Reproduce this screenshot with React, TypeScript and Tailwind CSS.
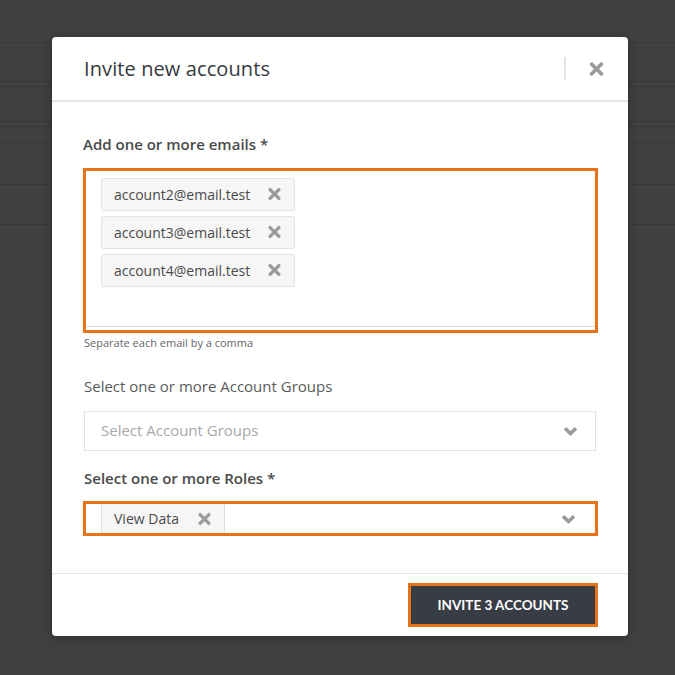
import React from 'react';
import { FaTimes } from 'react-icons/fa';

const emails = ['account2@email.test', 'account3@email.test', 'account4@email.test'];

const Chevron: React.FC = () => (
  <svg width="15" height="10" viewBox="0 0 15 10" className="shrink-0">
    <path d="M2 2.2 L7.5 7.5 L13 2.2" fill="none" stroke="#9a9a9a" strokeWidth="3.6" strokeLinejoin="miter" />
  </svg>
);

const Chip: React.FC<{ label: string }> = ({ label }) => (
  <div className="flex h-[33px] w-[194px] shrink-0 items-center justify-between rounded-[2px] border border-[#e4e4e4] bg-[#f6f6f6] pl-[12px] pr-[12px]">
    <span className="text-[14px] text-[#4a4a4a]">{label}</span>
    <FaTimes className="h-[18px] w-[15px] text-[#9a9a9a]" />
  </div>
);

const App: React.FC = () => {
  return (
    <div className="relative h-[675px] w-[675px] overflow-hidden bg-[#404040] font-['Open_Sans',sans-serif]">
      {/* page behind the overlay */}
      <div className="flex flex-col">
        <div className="h-[43px] border-b border-[#383838]" />
        <div className="h-[39px] border-b border-[#383838]" />
        <div className="h-[5px] border-b border-[#383838]" />
        <div className="h-[35px] border-b border-[#383838]" />
        <div className="h-[5px] border-b border-[#383838]" />
        <div className="h-[16px] border-b border-[#383838]" />
        <div className="h-[42px] border-b border-[#383838]" />
        <div className="h-[40px] border-b border-[#383838]" />
      </div>

      {/* modal */}
      <div className="absolute left-[52px] top-[37px] flex h-[599px] w-[576px] flex-col rounded-[4px] bg-white shadow-[0_2px_10px_rgba(0,0,0,0.3)]">
        <div className="flex h-[65px] shrink-0 items-center border-b-2 border-[#e6e6e6] pl-[32px] pr-[23px]">
          <h2 className="flex-1 text-[20px] tracking-[0.1px] text-[#353a40]">Invite new accounts</h2>
          <div className="mr-[22px] h-[23px] w-[2px] bg-[#e2e2e2]" />
          <FaTimes className="h-[20px] w-[17px] text-[#9a9a9a]" />
        </div>

        <div className="flex flex-1 flex-col px-[31px] pt-[31px]">
          <label className="text-[15px] font-semibold text-[#4a4a4a]">Add one or more emails *</label>
          <div className="mt-[12px] h-[165px] w-[515px] shrink-0 border-[3px] border-[#e5731b]">
            <div className="flex h-[156px] flex-col gap-[5px] border-b border-[#dcdcdc] pl-[15px] pt-[7px]">
              {emails.map((e) => (
                <Chip key={e} label={e} />
              ))}
            </div>
          </div>
          <p className="mt-[2px] pl-[1px] text-[11px] text-[#666]">Separate each email by a comma</p>

          <label className="mt-[24px] pl-[1px] text-[15px] text-[#5a5a5a]">Select one or more Account Groups</label>
          <div className="ml-[1px] mt-[13px] flex h-[40px] w-[512px] shrink-0 items-center justify-between border border-[#e2e2e2] pl-[16px] pr-[17px]">
            <span className="text-[15px] text-[#a8a8a8]">Select Account Groups</span>
            <Chevron />
          </div>

          <label className="mt-[16px] pl-[1px] text-[15px] font-semibold text-[#4a4a4a]">Select one or more Roles *</label>
          <div className="mt-[12px] flex h-[35px] w-[515px] shrink-0 items-center justify-between border-[3px] border-[#e5731b] pl-[15px] pr-[19px]">
            <div className="flex h-full w-[124px] items-center justify-between border-x border-[#dedede] bg-[#f6f6f6] pl-[12px] pr-[12px]">
              <span className="text-[14px] text-[#4a4a4a]">View Data</span>
              <FaTimes className="h-[18px] w-[15px] text-[#9a9a9a]" />
            </div>
            <Chevron />
          </div>
        </div>

        <div className="flex h-[63px] shrink-0 items-center justify-end border-t border-[#e6e6e6] pr-[30px]">
          <button className="h-[44px] w-[190px] border-[3px] border-[#e5731b] bg-[#383c45] font-['Lato',sans-serif] text-[13.5px] font-bold text-white">
            INVITE 3 ACCOUNTS
          </button>
        </div>
      </div>
    </div>
  );
};

export default App;
